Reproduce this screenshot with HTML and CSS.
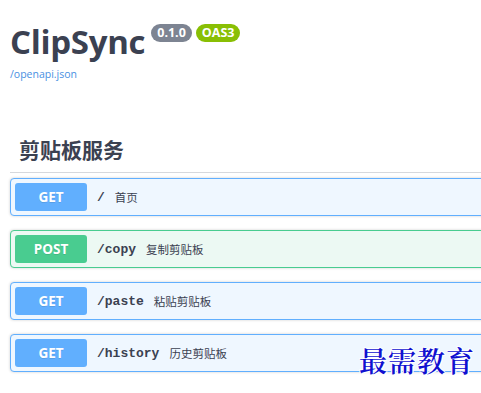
FILE: index.html
```html
<!DOCTYPE html>
<html lang="zh">
<head>
<meta charset="utf-8">
<title>ClipSync</title>
<link rel="stylesheet" href="styles.css">
</head>
<body>
<div class="page">
  <div class="info">
    <div class="title-row">
      <h1 class="title">ClipSync</h1>
      <span class="badge badge-version">0.1.0</span>
      <span class="badge badge-oas">OAS3</span>
    </div>
    <a class="spec-link" href="#">/openapi.json</a>
  </div>

  <div class="section">
    <h2 class="tag">剪贴板服务</h2>
    <div class="ops">
      <div class="op op-get">
        <span class="method">GET</span>
        <span class="path">/</span>
        <span class="desc">首页</span>
      </div>
      <div class="op op-post">
        <span class="method">POST</span>
        <span class="path">/copy</span>
        <span class="desc">复制剪贴板</span>
      </div>
      <div class="op op-get">
        <span class="method">GET</span>
        <span class="path">/paste</span>
        <span class="desc">粘贴剪贴板</span>
      </div>
      <div class="op op-get">
        <span class="method">GET</span>
        <span class="path">/history</span>
        <span class="desc">历史剪贴板</span>
      </div>
    </div>
  </div>
</div>
<div class="watermark">最需教育</div>
</body>
</html>
```

FILE: styles.css
```css
html, body {
  margin: 0;
  padding: 0;
  background: #ffffff;
  overflow: hidden;
}

body {
  width: 481px;
  height: 393px;
  position: relative;
  font-family: "Open Sans", "Noto Sans CJK SC", sans-serif;
  color: #3b4151;
}

.page {
  width: 520px;
  padding: 20px 0 0 10px;
}

.title-row {
  display: flex;
  align-items: flex-start;
}

.title {
  margin: 0;
  font-family: "Open Sans", sans-serif;
  font-weight: 700;
  font-size: 33px;
  line-height: 44px;
  letter-spacing: -0.3px;
  color: #3b4151;
}

.badge {
  display: inline-block;
  margin-top: 4px;
  height: 18px;
  line-height: 18px;
  padding: 0 6px;
  border-radius: 9px;
  font-family: "Open Sans", sans-serif;
  font-weight: 700;
  font-size: 12.5px;
  color: #ffffff;
}

.badge-version {
  margin-left: 6px;
  background: #7d8492;
}

.badge-oas {
  margin-left: 4px;
  background: #89bf04;
}

.spec-link {
  display: block;
  margin-top: 3px;
  font-family: "Open Sans", sans-serif;
  font-size: 10.5px;
  line-height: 14px;
  color: #4990e2;
  text-decoration: none;
}

.section {
  margin-top: 53px;
}

.tag {
  margin: 0;
  padding: 0 0 8px 9px;
  font-family: "Noto Sans CJK SC", sans-serif;
  font-weight: 700;
  font-size: 21px;
  line-height: 30px;
  color: #3b4151;
  border-bottom: 1px solid #d6d8dc;
}

.ops {
  display: flex;
  flex-direction: column;
  gap: 14px;
  padding-top: 5px;
}

.op {
  display: flex;
  align-items: center;
  padding: 4px;
  border: 1px solid;
  border-radius: 4px;
  box-shadow: 0 0 3px rgba(0, 0, 0, 0.19);
}

.op-get {
  background: #eff7ff;
  border-color: #61affe;
}

.op-post {
  background: #ecf9f3;
  border-color: #49cc90;
}

.method {
  width: 72px;
  height: 28px;
  line-height: 28px;
  text-align: center;
  border-radius: 3px;
  font-family: "Open Sans", sans-serif;
  font-weight: 700;
  font-size: 13.5px;
  color: #ffffff;
  text-shadow: 0 1px 0 rgba(0, 0, 0, 0.1);
}

.op-get .method {
  background: #61affe;
}

.op-post .method {
  background: #49cc90;
}

.path {
  margin-left: 10px;
  font-family: "Liberation Mono", monospace;
  font-weight: 700;
  font-size: 13px;
  color: #3b4151;
}

.desc {
  margin-left: 10px;
  font-family: "Noto Sans CJK SC", sans-serif;
  font-size: 11.5px;
  color: #3b4151;
}

.watermark {
  position: absolute;
  left: 359px;
  top: 340px;
  font-family: "Noto Serif CJK SC", "Noto Sans CJK SC", serif;
  font-weight: 600;
  font-size: 28px;
  line-height: 40px;
  letter-spacing: 1px;
  color: #1010d0;
  text-shadow: 1px 0 0 #fff, -1px 0 0 #fff, 0 1px 0 #fff, 0 -1px 0 #fff, 1px 1px 0 #fff, -1px -1px 0 #fff;
}
```
